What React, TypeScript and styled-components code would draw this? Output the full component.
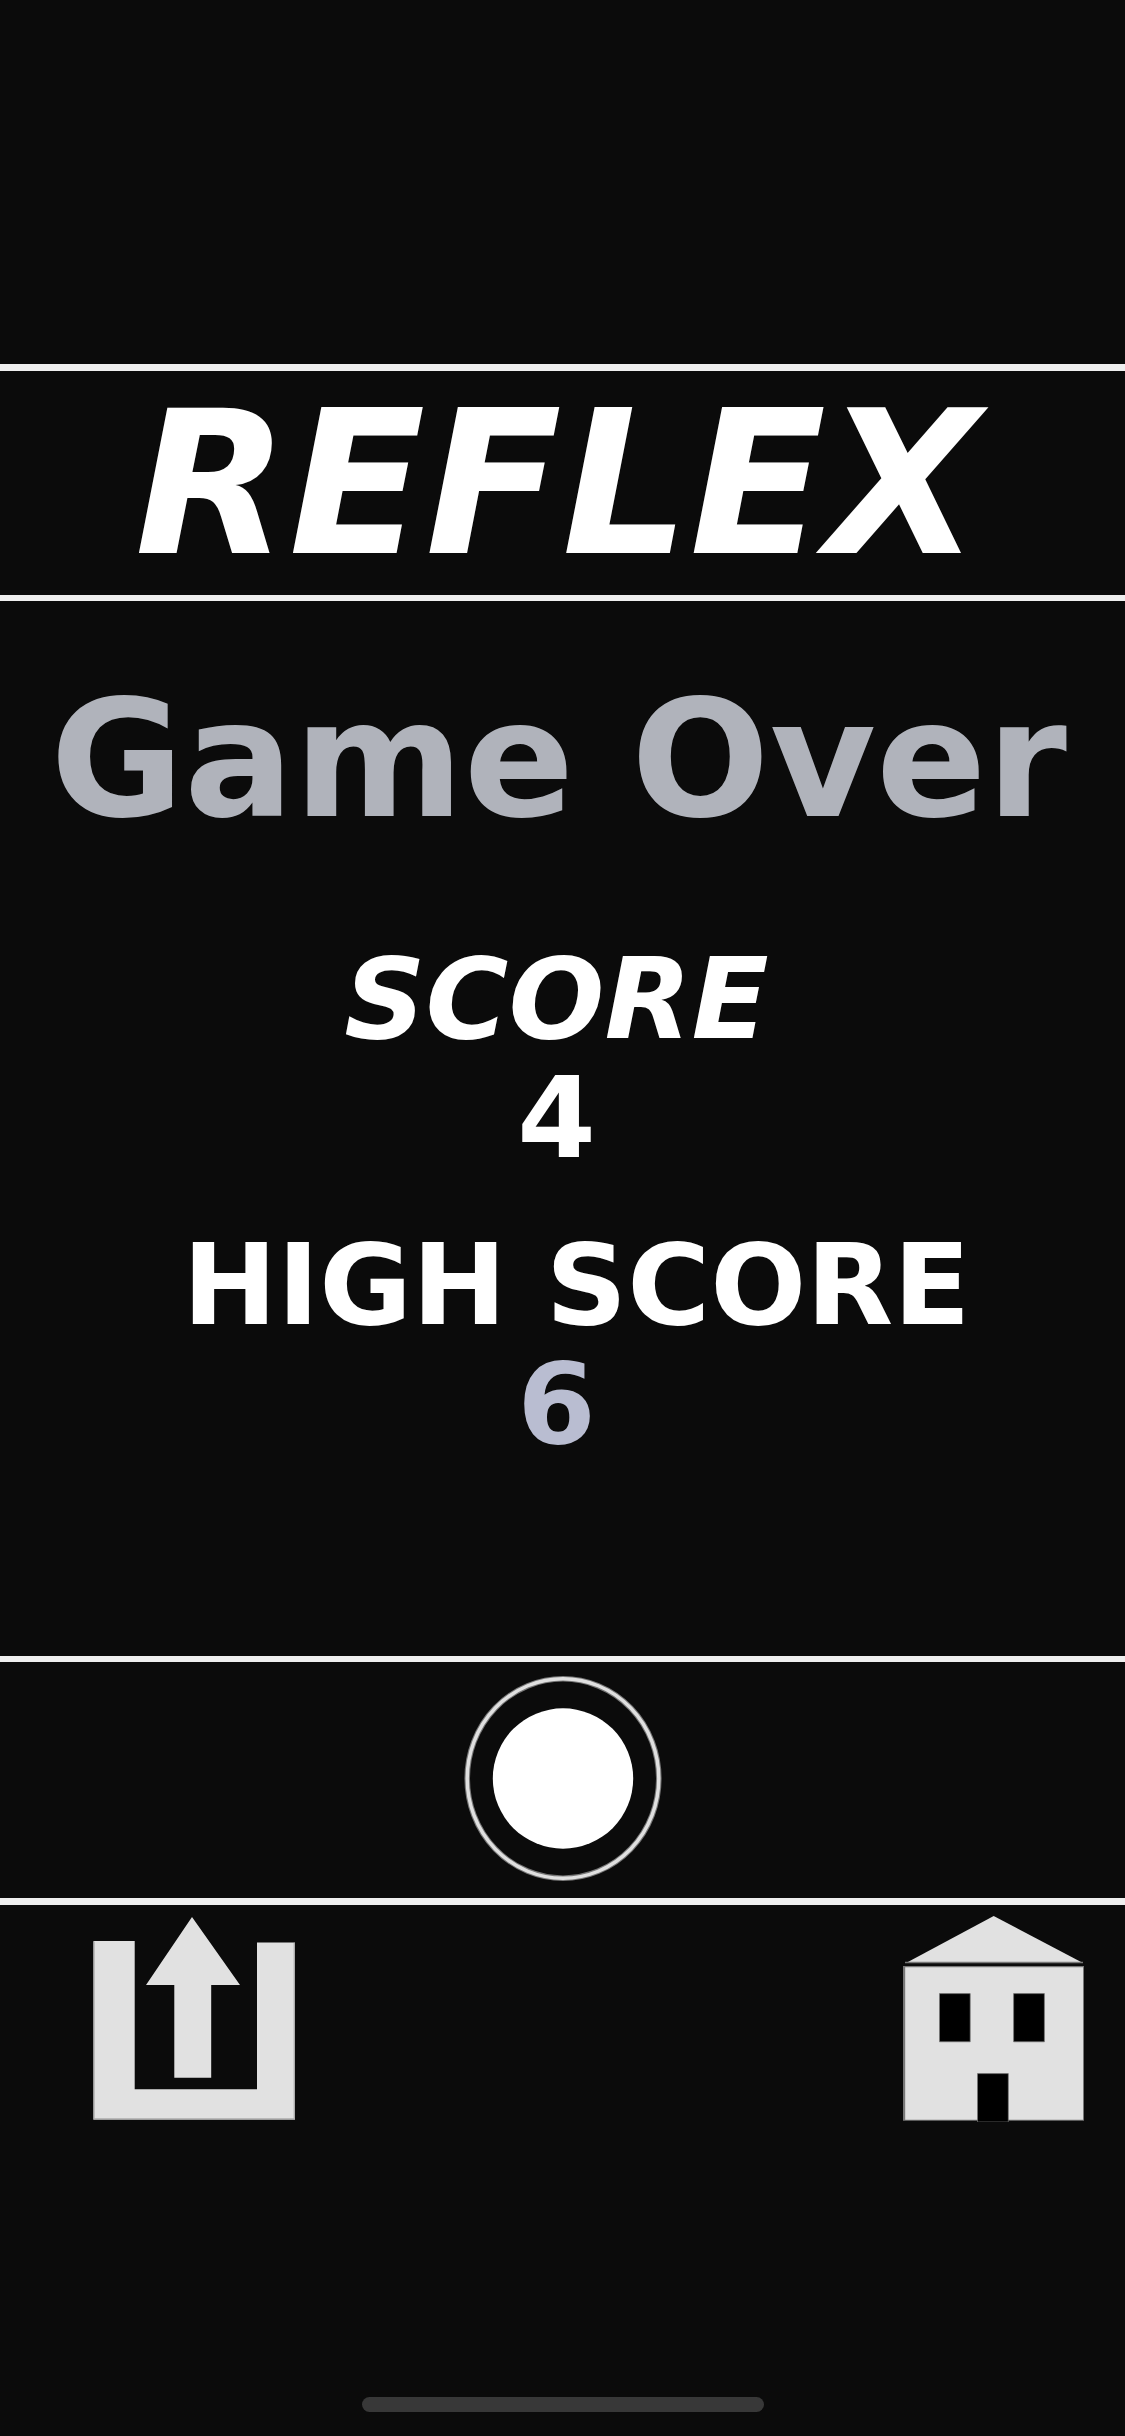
import React from "react";
import styled, { createGlobalStyle } from "styled-components";

const Global = createGlobalStyle`
  * { box-sizing: border-box; }
  body { margin: 0; background: #0b0b0b; }
`;

const Screen = styled.main`
  display: flex;
  flex-direction: column;
  align-items: center;
  min-height: 100vh;
  padding-top: 364px;
  background: #0b0b0b;
  color: #fff;
  font-family: Verdana, "DejaVu Sans", sans-serif;
  font-weight: 700;
`;

const Band = styled.div<{ $top: number; $bottom: number; $inner: number }>`
  display: flex;
  align-items: center;
  justify-content: center;
  width: 100%;
  height: ${(p) => p.$top + p.$inner + p.$bottom}px;
  border: solid #efefef;
  border-width: ${(p) => p.$top}px 0 ${(p) => p.$bottom}px;
`;

const Title = styled.h1`
  margin: 0;
  padding: 2px 10px 0 0;
  font-size: 200px;
  font-style: italic;
  line-height: 220px;
`;

const Headline = styled.h2`
  margin: 49px 0 70px;
  padding-right: 8px;
  color: #b0b3bb;
  font-size: 163px;
  line-height: 220px;
  white-space: nowrap;
`;

const Scores = styled.dl`
  display: flex;
  flex-direction: column;
  align-items: center;
  margin: 0 0 144px;
  padding-right: 12px;
  font-size: 113px;
  line-height: 119px;
`;

const Label = styled.dt<{ $record?: boolean }>`
  padding-left: ${(p) => (p.$record ? 40 : 0)}px;
  font-style: ${(p) => (p.$record ? "normal" : "italic")};
  white-space: nowrap;
`;

const Value = styled.dd<{ $record?: boolean }>`
  margin: 0 0 48px;
  color: ${(p) => (p.$record ? "#b9bdd1" : "#fff")};
`;

const IconButton = styled.button`
  display: block;
  padding: 0;
  border: 0;
  background: none;
  cursor: pointer;

  svg {
    display: block;
  }
`;

const Actions = styled.nav`
  display: flex;
  justify-content: space-between;
  align-items: flex-start;
  width: 100%;
  padding: 11px 40px 0 92px;
`;

const HomeIndicator = styled.div`
  width: 402px;
  height: 15px;
  margin: auto 0 24px;
  border-radius: 8px;
  background: #383838;
`;

const RecordIcon = () => (
  <svg width="200" height="208" viewBox="0 0 200 208" aria-hidden="true">
    <g fill="none">
      <ellipse cx="100" cy="102.5" rx="95.8" ry="99.7" stroke="#777" strokeWidth="5.6" />
      <ellipse cx="100" cy="102.5" rx="95.8" ry="99.7" stroke="#e0e0e0" strokeWidth="3.4" />
    </g>
    <circle cx="100" cy="102.5" r="70.2" fill="#fff" />
  </svg>
);

const ShareIcon = () => (
  <svg width="204" height="204" viewBox="0 0 204 204" aria-hidden="true">
    <g fill="#e1e1e1">
      <path d="M1.5 25H42.7V173.3H165V26.5H203V203.5H1.5Z" />
      <path d="M100 1L148 69H119.2V161.7H82.3V69H54Z" />
    </g>
    <path d="M202.3 27V203H2V25.5" fill="none" stroke="#aaa" strokeWidth="1.3" />
  </svg>
);

const HouseIcon = () => (
  <svg width="182" height="206" viewBox="0 0 182 206" aria-hidden="true">
    <path d="M90.7 0L180 47H3Z" fill="#e1e1e1" />
    <path d="M2 46.5H180" stroke="#777" strokeWidth="1.4" />
    <path d="M0 50H181V204.8H0Z" fill="#777" />
    <path d="M2.2 51.3H180V203.8H2.2Z" fill="#e1e1e1" />
    <g fill="#000" stroke="#777" strokeWidth="0.7">
      <path d="M36.5 77.6H67.2V125.8H36.5Z" />
      <path d="M110.6 77.6H141.4V125.8H110.6Z" />
      <path d="M74.5 157.6H105.3V206H74.5Z" />
    </g>
  </svg>
);

export default function App() {
  return (
    <Screen>
      <Global />
      <Band $top={7} $inner={224} $bottom={6}>
        <Title>REFLEX</Title>
      </Band>
      <Headline>Game Over</Headline>
      <Scores>
        <Label>SCORE</Label>
        <Value>4</Value>
        <Label $record>HIGH SCORE</Label>
        <Value $record>6</Value>
      </Scores>
      <Band $top={6} $inner={236} $bottom={7}>
        <IconButton type="button" aria-label="Play again">
          <RecordIcon />
        </IconButton>
      </Band>
      <Actions>
        <IconButton type="button" aria-label="Share">
          <ShareIcon />
        </IconButton>
        <IconButton type="button" aria-label="Home">
          <HouseIcon />
        </IconButton>
      </Actions>
      <HomeIndicator />
    </Screen>
  );
}
